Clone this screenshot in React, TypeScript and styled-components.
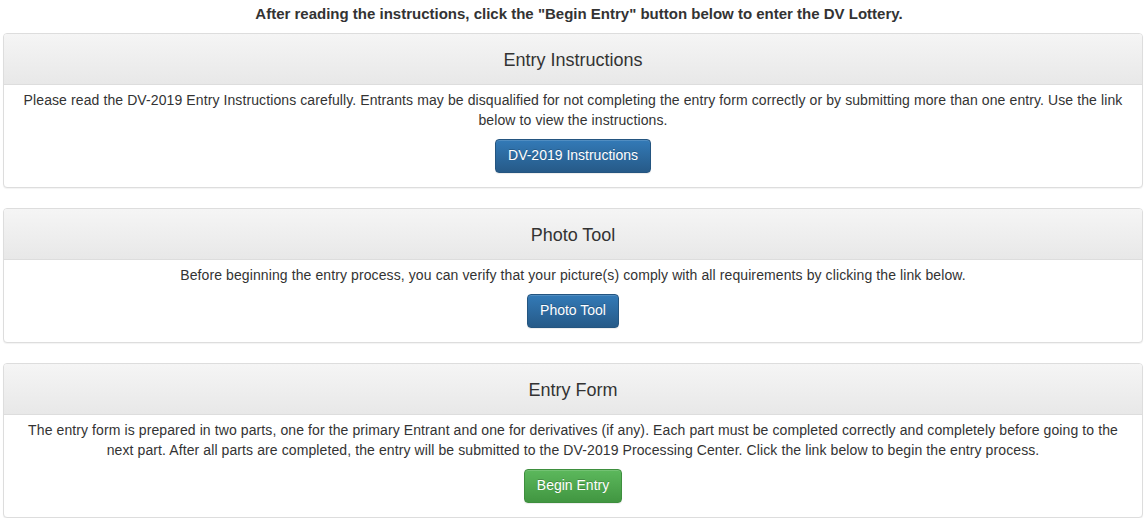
import styled, { createGlobalStyle } from 'styled-components';

const GlobalStyle = createGlobalStyle`
  html, body {
    margin: 0;
    padding: 0;
    background: #fff;
  }
  body {
    font-family: "Liberation Sans", Arial, Helvetica, sans-serif;
    font-size: 14px;
    line-height: 1.42857;
    color: #333;
  }
`;

const Page = styled.div`
  padding: 0 3px;
`;

const Lead = styled.div`
  height: 33px;
  display: flex;
  align-items: center;
  justify-content: center;
  padding: 0 0 6px 12px;
  box-sizing: border-box;
  font-weight: bold;
  font-size: 15px;
`;

const Panel = styled.div`
  border: 1px solid #ddd;
  border-radius: 4px;
  background: #fff;
  box-shadow: 0 1px 1px rgba(0, 0, 0, 0.05);
  margin-bottom: 20px;
  overflow: hidden;
`;

const Heading = styled.div`
  height: 51px;
  display: flex;
  align-items: center;
  justify-content: center;
  padding-top: 3px;
  border-bottom: 1px solid #ddd;
  background-image: linear-gradient(to bottom, #f5f5f5 0%, #e8e8e8 100%);
  font-size: 18px;
  color: #333;
  box-sizing: border-box;
`;

const Body = styled.div`
  padding: 6px 15px 14px;
  text-align: center;

  p {
    margin: 0 0 8px;
    letter-spacing: 0.1px;
  }
`;

const Button = styled.button<{ $tone: 'primary' | 'success' }>`
  display: inline-block;
  padding: 6px 12px;
  font-family: inherit;
  font-size: 14px;
  line-height: 1.42857;
  color: #fff;
  border-radius: 4px;
  cursor: pointer;
  text-shadow: 0 -1px 0 rgba(0, 0, 0, 0.2);
  box-shadow: inset 0 1px 0 rgba(255, 255, 255, 0.15), 0 1px 1px rgba(0, 0, 0, 0.075);
  border: 1px solid ${(p) => (p.$tone === 'primary' ? '#245580' : '#3e8f3e')};
  background-image: ${(p) =>
    p.$tone === 'primary'
      ? 'linear-gradient(to bottom, #337ab7 0%, #265a88 100%)'
      : 'linear-gradient(to bottom, #5cb85c 0%, #419641 100%)'};
`;

const sections = [
  {
    title: 'Entry Instructions',
    text: 'Please read the DV-2019 Entry Instructions carefully. Entrants may be disqualified for not completing the entry form correctly or by submitting more than one entry. Use the link below to view the instructions.',
    button: 'DV-2019 Instructions',
    tone: 'primary' as const,
  },
  {
    title: 'Photo Tool',
    text: 'Before beginning the entry process, you can verify that your picture(s) comply with all requirements by clicking the link below.',
    button: 'Photo Tool',
    tone: 'primary' as const,
  },
  {
    title: 'Entry Form',
    text: 'The entry form is prepared in two parts, one for the primary Entrant and one for derivatives (if any). Each part must be completed correctly and completely before going to the next part. After all parts are completed, the entry will be submitted to the DV-2019 Processing Center. Click the link below to begin the entry process.',
    button: 'Begin Entry',
    tone: 'success' as const,
  },
];

export default function App() {
  return (
    <>
      <GlobalStyle />
      <Page>
        <Lead>After reading the instructions, click the "Begin Entry" button below to enter the DV Lottery.</Lead>
        {sections.map((s) => (
          <Panel key={s.title}>
            <Heading>{s.title}</Heading>
            <Body>
              <p>{s.text}</p>
              <Button $tone={s.tone}>{s.button}</Button>
            </Body>
          </Panel>
        ))}
      </Page>
    </>
  );
}
